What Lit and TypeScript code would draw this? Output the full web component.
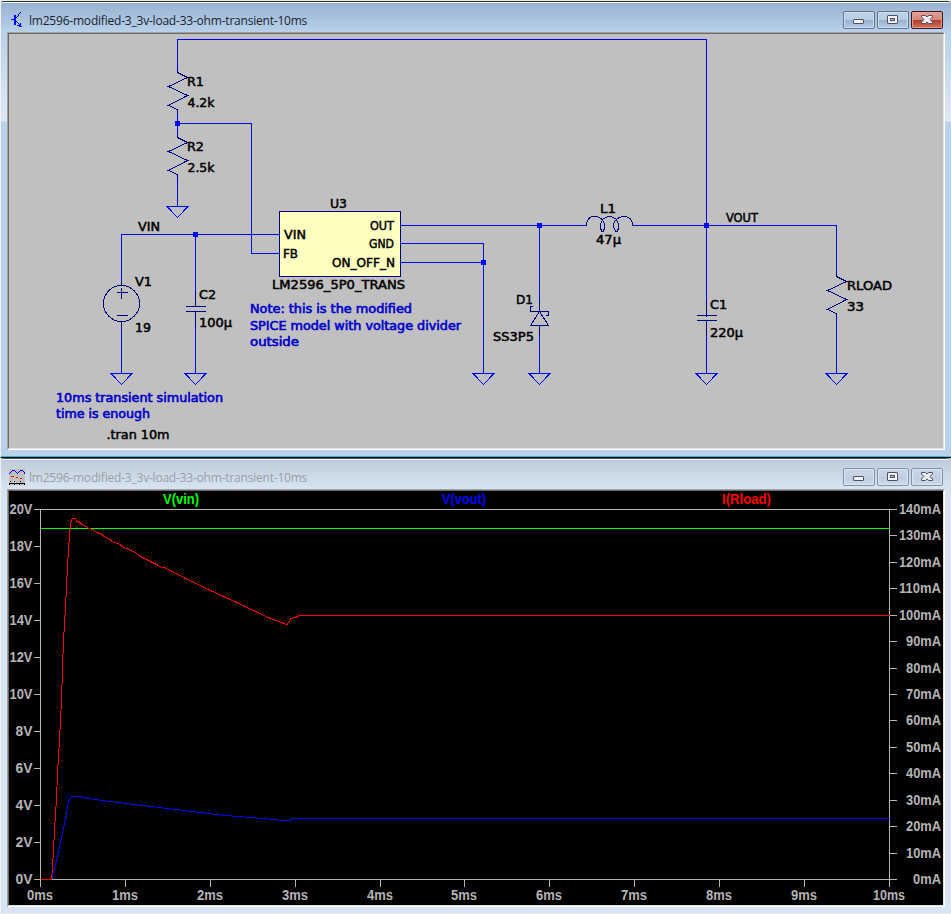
import { LitElement, html, svg, css } from "lit";
import { customElement, property } from "lit/decorators.js";

type Label = [text: string, x: number, baseline: number, width: number];

@customElement("mdi-window")
class MdiWindow extends LitElement {
  @property() caption = "";
  @property({ type: Boolean, reflect: true }) active = false;

  static styles = css`
    :host {
      display: flex;
      flex-direction: column;
      box-sizing: border-box;
      overflow: hidden;
      font-family: "Open Sans", "Noto Sans", sans-serif;
      height: 456px;
      border-top: 1px solid #55585c;
      border-bottom: 1px solid #e8eef4;
      border-left: 1px solid #eef3f8;
      border-radius: 4px 4px 0 0;
      background: #d7e4f2;
      color: #9a9ea4;
    }
    :host([active]) {
      height: 457px;
      border-top-color: #2a302c;
      border-bottom: 1px solid #000;
      background: linear-gradient(#b9d1ea 30px, #dfe9f5 119px, #b9d1ea 120px);
      color: #1c2430;
    }
    .bar {
      flex: none;
      display: flex;
      align-items: flex-start;
      gap: 2px;
      height: 30px;
      box-sizing: border-box;
      padding: 9px 8px 0 8px;
      border-top: 1px solid #f4f8fb;
      background: linear-gradient(#bfcddb, #d7e4f2);
    }
    :host([active]) .bar {
      background: linear-gradient(#98b3d1, #b9d1ea);
    }
    .icon { width: 16px; height: 16px; flex: none; }
    .caption {
      flex: 1;
      margin: 0 0 0 2px;
      font-size: 12px;
      line-height: 18px;
      letter-spacing: -0.21px;
      white-space: nowrap;
    }
    .btn {
      box-sizing: border-box;
      width: 32px;
      height: 18px;
      margin-top: -1px;
      border: 1px solid #8291ae;
      border-radius: 2px;
      box-shadow: inset 0 0 0 1px #d9e5f2;
      background: linear-gradient(#c9d7e6, #c3d1e2 50%, #bccbde 50%, #cfdcea);
    }
    :host([active]) .btn {
      border-color: #5f7491;
      box-shadow: inset 0 0 0 1px #cfdff0;
      background: linear-gradient(#bfd2e6, #b8cce2 48%, #96b0cc 50%, #b5cce5);
    }
    :host([active]) .btn.close {
      border-color: #43141e;
      box-shadow: inset 0 0 0 1px #dfa196;
      background: linear-gradient(#e3a196, #d58777 48%, #b33a24 50%, #d2705a);
    }
    .btn svg { display: block; width: 30px; height: 16px; }
    .client {
      flex: 1;
      min-height: 0;
      margin: 0 6px 6px 6px;
      border: 1px solid #a0a0a0;
      border-right-color: #fff;
      border-bottom-color: #fff;
      display: flex;
    }
    .inner {
      flex: 1;
      border: 1px solid #696969;
      border-right-color: #e3e3e3;
      border-bottom-color: #e3e3e3;
      display: flex;
      overflow: hidden;
    }
    :host([active]) .edge { height: 1px; flex: none; background: #1fc5dc; margin-left: -1px; }
  `;

  render() {
    const ink = "#4c5068";
    return html`
      <div class="bar">
        <div class="icon"><slot name="icon"></slot></div>
        <div class="caption">${this.caption}</div>
        <div class="btn">
          <svg viewBox="0 0 30 16"><rect x="9.5" y="7.5" width="10" height="4" rx=".5" fill="#f3f4f6" stroke=${ink} /></svg>
        </div>
        <div class="btn">
          <svg viewBox="0 0 30 16">
            <rect x="9.5" y="3.5" width="10" height="8" rx=".5" fill="#f3f4f6" stroke=${ink} />
            <rect x="12.5" y="6.5" width="4" height="2" fill="#b4c4d8" stroke=${ink} />
          </svg>
        </div>
        <div class="btn close">
          <svg viewBox="0 0 30 16">
            <path d="M9.500 3.500h3.800l1.700 1.600 1.700-1.600h3.800v1.400l-2.500 2.600 2.500 2.600v1.400h-3.800l-1.700-1.600-1.700 1.600H9.500v-1.400l2.500-2.600-2.500-2.600z" fill="#f3f4f6" stroke=${ink} />
          </svg>
        </div>
      </div>
      <div class="client"><div class="inner"><slot></slot></div></div>
      <div class="edge"></div>
    `;
  }
}

@customElement("circuit-schematic")
class CircuitSchematic extends LitElement {
  static styles = css`
    :host { display: block; flex: 1; background: #c0c0c0; }
    svg { display: block; }
    .line { fill: none; shape-rendering: crispEdges; stroke-width: 1; }
    .wire { stroke: #0000ff; }
    .part { stroke: #000080; }
    .node { fill: #0000ff; shape-rendering: crispEdges; }
    .chip { fill: #ffffc0; stroke: #000080; shape-rendering: crispEdges; }
    text {
      font-family: "DejaVu Sans Condensed", "DejaVu Sans", sans-serif;
      font-size: 12px;
      fill: #000;
      stroke: #000;
      stroke-width: 0.45;
    }
    .note { fill: #0000cc; stroke: #0000cc; stroke-width: 0.55; }
  `;

  private wires = [
    "M177 72V39H706V316", "M177 109V137", "M177 123H251V253H279", "M177 174V206",
    "M121 285V234H279", "M195 234V306", "M195 311V373", "M121 321V373",
    "M400 225H586", "M400 243H483V373", "M400 262H483", "M539 225V311", "M539 325V373",
    "M632 225H836V276", "M706 320V373", "M836 313V373",
  ];
  private grounds = [[177, 206], [121, 373], [195, 373], [483, 373], [539, 373], [706, 373], [836, 373]];
  private nodes = [[177, 123], [195, 234], [539, 225], [483, 262], [706, 225]];
  private resistors = [[177, 72], [177, 137], [836, 276]];
  private capacitors = [[195, 306], [706, 315]];
  private labels: Label[] = [
    ["R1", 187, 86, 17], ["4.2k", 187.5, 107, 27], ["R2", 187, 151, 17], ["2.5k", 187.5, 172, 27],
    ["VIN", 138, 231, 22], ["U3", 330, 208, 17], ["VIN", 284, 239, 22], ["FB", 283, 258, 15],
    ["OUT", 370, 230, 24], ["GND", 369, 248, 25], ["ON_OFF_N", 332, 267, 63],
    ["LM2596_5P0_TRANS", 272, 289, 133], ["V1", 135, 286, 17], ["19", 135, 332, 16],
    ["C2", 199, 299, 17], ["100µ", 199, 327, 33], ["D1", 516, 304, 17], ["SS3P5", 493, 341, 41],
    ["L1", 600, 213, 16], ["47µ", 596, 244, 25], ["VOUT", 726, 222, 32], ["C1", 710, 309, 17],
    ["220µ", 710, 337, 33], ["RLOAD", 847, 290, 45], ["33", 847, 311, 17], [".tran 10m", 106.5, 439, 63],
  ];
  private notes: Label[] = [
    ["Note: this is the modified", 250, 313, 162],
    ["SPICE model with voltage divider", 250, 330, 211],
    ["outside", 250, 346, 49],
    ["10ms transient simulation", 56, 402, 167],
    ["time is enough", 56, 418, 94],
  ];

  private text([t, x, y, w]: Label, cls = "") {
    return svg`<text class=${cls} x=${x} y=${y} textLength=${w} lengthAdjust="spacingAndGlyphs">${t}</text>`;
  }

  render() {
    return html`
      <svg width="934" height="414" viewBox="9 34 934 414">
        <g transform="translate(.5 .5)">
          ${this.wires.map((d) => svg`<path class="line wire" d=${d} />`)}
          ${this.grounds.map(([x, y]) => svg`<path class="line wire" d="M${x - 10.5} ${y}h21l-10.5 11z" />`)}
          <rect class="chip" x="279" y="211" width="121" height="65" />
          ${this.resistors.map(([x, y]) => svg`<path class="line part" d="M${x} ${y - 4}v4l10 5l-19 9l19 9l-19 10l9 4v4" />`)}
          ${this.capacitors.map(([x, y]) => svg`<path class="line part" d="M${x} ${y - 15}v15M${x - 9.5} ${y}h20M${x - 9.5} ${y + 5}h20M${x} ${y + 5}v15" />`)}
          <circle class="line part" cx="121" cy="303" r="18" />
          <path class="line part" d="M121 281v4M121 321v5M116 292h11M121 287v11M116 315h11" />
          <path class="line part" d="M539 300v11M532.5 306H530v5h18v4h-2.5M539 311l-9 14h18zM539 325v10" />
          <path class="line part" d="M586 225C586 219 589 216 594 216C600 216 604 220 604 225C604 228 603 231 602 231C601 231 600 228 600 225C600 220 604 216 609 216C614 216 618 220 618 225C618 228 617 231 616 231C615 231 613 228 613 225C613 220 618 216 623 216C629 216 632 219 632 225" />
        </g>
        ${this.nodes.map(([x, y]) => svg`<rect class="node" x=${x - 2} y=${y - 2} width="5" height="5" />`)}
        ${this.labels.map((l) => this.text(l))}
        ${this.notes.map((l) => this.text(l, "note"))}
      </svg>
    `;
  }
}

@customElement("waveform-plot")
class WaveformPlot extends LitElement {
  static styles = css`
    :host { display: block; flex: 1; background: #000; }
    svg { display: block; }
    .line { fill: none; shape-rendering: crispEdges; stroke-width: 1; }
    .axis { stroke: #b4b4b4; }
    .vin { stroke: #00ff00; }
    .vout { stroke: #0000ff; }
    .iload { stroke: #ff0000; }
    text { font: bold 13.8px "Liberation Sans", Arial, sans-serif; fill: #b4b4b4; }
    .t-vin { fill: #00ff00; }
    .t-vout { fill: #0000ff; }
    .t-iload { fill: #ff0000; }
  `;

  private iload =
    "40,879 51,879 52,868 53,850 54,830 56,798 57,773 58,757 60,720 61,700 62,668 63,640 65,607 67,565 69,535 70,523 71,519 72,518 75,518 76,521 80,522 81,524 86,526 88,528 93,529 96,532 100,533 105,537 108,538 113,542 118,543 123,547 126,548 135,552 138,555 158,565 161,567 164,567 185,578 210,590 236,602 255,611 270,618 286,624 288,623 290,618 295,617 299,615 889,615";
  private vout =
    "40,879 51,879 53,873 56,860 60,842 63,828 66,813 68,801 71,796 80,796 88,798 102,800 125,803 150,806 175,809 200,812 225,815 250,817 275,819 280,820 289,820 291,818 889,818";

  render() {
    const volts = Array.from({ length: 11 }, (_, i) => ({ y: 509 + 37 * i, t: `${20 - 2 * i}V` }));
    const amps = Array.from({ length: 15 }, (_, i) => ({ y: Math.round(509 + (370 * i) / 14), t: `${140 - 10 * i}mA` }));
    const times = Array.from({ length: 11 }, (_, i) => ({ x: Math.round(40 + 84.88 * i), t: `${i}ms` }));
    return html`
      <svg width="934" height="414" viewBox="9 491 934 414">
        <g transform="translate(.5 .5)">
          <path class="line axis" d="M33 509H896M40 509V879M889 509V879M33 879H896" />
          ${volts.map((v) => svg`<path class="line axis" d="M33 ${v.y}h7" />`)}
          ${amps.map((a) => svg`<path class="line axis" d="M889 ${a.y}h7" />`)}
          ${times.map((m) => svg`<path class="line axis" d="M${m.x} 879v7" />`)}
          <path class="line vin" d="M40 528H889" />
          <polyline class="line vout" points=${this.vout} />
          <polyline class="line iload" points=${this.iload} />
        </g>
        ${volts.map(({ y, t }) => {
          const w = t.length === 3 ? 23 : 17;
          return svg`<text x=${32.5 - w} y=${y + 5} textLength=${w} lengthAdjust="spacingAndGlyphs">${t}</text>`;
        })}
        ${amps.map(({ y, t }) => {
          const w = 28 + 7 * (t.length - 3);
          return svg`<text x=${941 - w} y=${y + 5} textLength=${w} lengthAdjust="spacingAndGlyphs">${t}</text>`;
        })}
        ${times.map(({ x, t }) => {
          const w = t.length === 4 ? 32 : 26;
          return svg`<text x=${x - w / 2} y="900" textLength=${w} lengthAdjust="spacingAndGlyphs">${t}</text>`;
        })}
        <text class="t-vin" x="163" y="504" textLength="36" lengthAdjust="spacingAndGlyphs">V(vin)</text>
        <text class="t-vout" x="442" y="504" textLength="44" lengthAdjust="spacingAndGlyphs">V(vout)</text>
        <text class="t-iload" x="722" y="504" textLength="49" lengthAdjust="spacingAndGlyphs">I(Rload)</text>
      </svg>
    `;
  }
}

@customElement("app-root")
class AppRoot extends LitElement {
  static styles = css`
    :host {
      display: flex;
      flex-direction: column;
      box-sizing: border-box;
      width: 951px;
      height: 914px;
      padding-top: 1px;
      background: #e9edea;
    }
    .icon { display: block; width: 16px; height: 16px; shape-rendering: crispEdges; }
  `;

  render() {
    const caption = "lm2596-modified-3_3v-load-33-ohm-transient-10ms";
    return html`
      <mdi-window active caption=${caption}>
        <svg slot="icon" class="icon" viewBox="0 0 16 16">
          <path d="M2 7h3v1H2zM5 3h2v10H5zM7 5h1v1H7zM8 4h1v1H8zM9 2h1v2H9zM10 1h1v1h-1zM11 0h1v1h-1zM7 9h1v1H7zM8 10h1v1H8zM9 11h1v1H9zM11 11h1v3h1v1h-3v-1H8v-1h2v-1h1z" fill="#0000ff" />
        </svg>
        <circuit-schematic></circuit-schematic>
      </mdi-window>
      <mdi-window caption=${caption}>
        <svg slot="icon" class="icon" viewBox="0 0 16 16">
          <path d="M0 0h16v16H0z" fill="#c0c0c0" />
          <path d="M0 4h1v1H0zM1 3h1v1H1zM2 2h1v1H2zM3 1h3v1H3zM6 2h1v1H6zM7 3h1v1H7zM8 4h1v1H8zM9 3h1v1H9zM10 2h1v1h-1zM11 1h3v1h-3zM14 2h1v1h-1zM15 3h1v2h-1z" fill="#0000ff" />
          <path d="M2 7h3v1H2zM7 8h2v1H7zM11 9h2v1h-2z" fill="#ff0000" />
          <path d="M5 12h1v1H5zM1 12h1v1H1zM11 12h1v1h-1zM0 14h16v1H0zM0 15h1v1H0zM5 15h1v1H5zM10 15h1v1h-1zM15 15h1v1h-1z" fill="#000" />
        </svg>
        <waveform-plot></waveform-plot>
      </mdi-window>
    `;
  }
}
